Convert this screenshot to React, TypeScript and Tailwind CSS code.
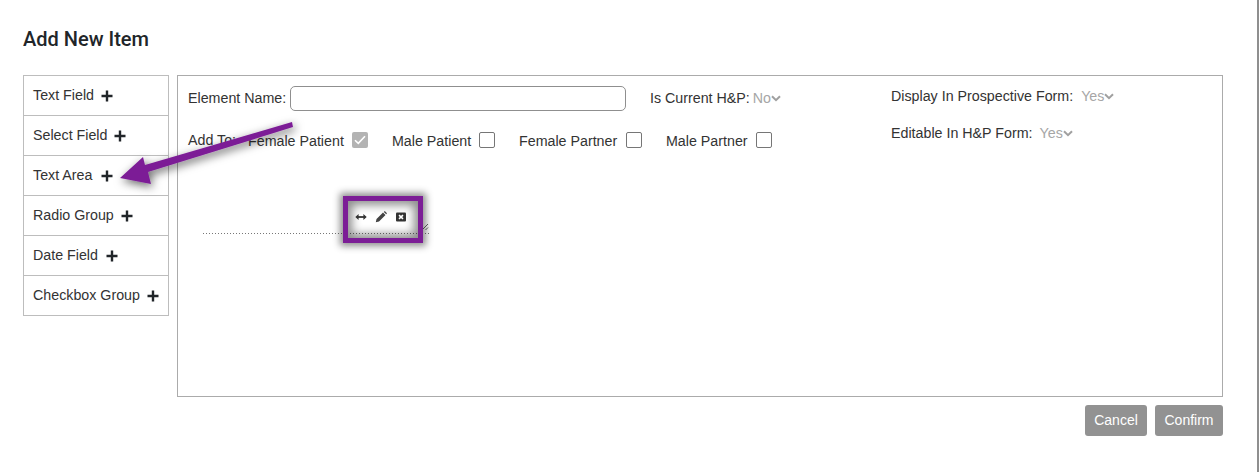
import React from "react";

const items: [string, string][] = [
  ["Text Field", "ml-[7px]"],
  ["Select Field", "ml-[7px]"],
  ["Text Area", "ml-[9px]"],
  ["Radio Group", "ml-[7px]"],
  ["Date Field", "ml-[8px]"],
  ["Checkbox Group", "ml-[7px]"],
];

function Plus({ gap }: { gap: string }) {
  return (
    <svg width="12" height="12" viewBox="0 0 12 12" className={`${gap} shrink-0`}>
      <path d="M6 0.5V11.5M0.5 6H11.5" stroke="#212529" strokeWidth="2.4" />
    </svg>
  );
}

function Chevron() {
  return (
    <svg width="10" height="7" viewBox="0 0 10 7" className="shrink-0">
      <path d="M1 1.2L5 5.2L9 1.2" fill="none" stroke="#a0a0a0" strokeWidth="2" />
    </svg>
  );
}

function Check({ label, checked, width, gap = "ml-[8px]" }: { label: string; checked?: boolean; width: string; gap?: string }) {
  return (
    <div className={`flex items-center ${width}`}>
      <span className="mt-[4px] whitespace-nowrap">{label}</span>
      {checked ? (
        <span className={`${gap} flex h-[16px] w-[16px] items-center justify-center rounded-[2px] bg-[#b3b3b3]`}>
          <svg width="12" height="10" viewBox="0 0 12 10">
            <path d="M1 5.2L4.3 8.4L11 1.2" fill="none" stroke="#fff" strokeWidth="1.6" />
          </svg>
        </span>
      ) : (
        <span className={`${gap} h-[16px] w-[16px] rounded-[2px] border-[1.5px] border-[#767676] bg-white`} />
      )}
    </div>
  );
}

export default function App() {
  return (
    <div
      className="relative h-[472px] w-[1259px] overflow-hidden border-r-2 border-[#8f8f8f] bg-white text-[14.25px] text-[#333]"
      style={{ fontFamily: '"Liberation Sans", Arial, sans-serif' }}
    >
      <div className="pl-[23px] pr-[34px] pt-[27px]">
        <h1 className="h-[48px] font-['Roboto',sans-serif] text-[20px] leading-[24px] font-medium text-[#212529]">
          Add New Item
        </h1>
        <div className="flex items-start gap-[8px]">
          <div className="w-[146px] border border-b-0 border-[#bdbdbd]">
            {items.map(([label, gap]) => (
              <div key={label} className="flex h-[40px] items-center border-b border-[#bdbdbd] pl-[9px]">
                <span className="whitespace-nowrap">{label}</span>
                <Plus gap={gap} />
              </div>
            ))}
          </div>
          <div className="h-[322px] flex-1 border border-[#ababab] pl-[10px] pt-[10px]">
            <div className="flex">
              <div className="w-[703px] shrink-0">
                <div className="flex h-[24px] items-center">
                  <span className="w-[102px] shrink-0 whitespace-nowrap pt-[1px]">Element Name:</span>
                  <span className="h-[25px] w-[336px] shrink-0 rounded-[5px] border border-[#8f8f8f]" />
                  <span className="ml-[24px] whitespace-nowrap pt-[1px]">Is Current H&amp;P:</span>
                  <span className="ml-[3px] pt-[1px] text-[#a6a6a6]">No</span>
                  <Chevron />
                </div>
                <div className="mt-[18px] flex h-[24px] items-center">
                  <span className="w-[60px] shrink-0 whitespace-nowrap pt-[2px]">Add To:</span>
                  <Check label="Female Patient" checked width="w-[144px]" />
                  <Check label="Male Patient" width="w-[127px]" />
                  <Check label="Female Partner" width="w-[147px]" gap="ml-[9px]" />
                  <Check label="Male Partner" width="w-[110px]" />
                </div>
                <div className="relative ml-[15px] mt-[61px] h-[21px] w-[226px]">
                  <div className="absolute inset-x-0 bottom-0 h-[1px] bg-[repeating-linear-gradient(90deg,#777_0_1px,transparent_1px_3px)]" />
                  <svg width="8" height="8" viewBox="0 0 8 8" className="absolute bottom-[3px] right-0">
                    <path d="M1 7L7 1M4.5 7L7 4.5" stroke="#666" strokeWidth="1" />
                  </svg>
                </div>
              </div>
              <div className="-mt-[2px]">
                <div className="flex h-[24px] items-center">
                  <span className="whitespace-nowrap pt-[1px]">Display In Prospective Form:</span>
                  <span className="ml-[8px] pt-[1px] text-[#a6a6a6]">Yes</span>
                  <Chevron />
                </div>
                <div className="mt-[13px] flex h-[24px] items-center">
                  <span className="whitespace-nowrap pt-[1px]">Editable In H&amp;P Form:</span>
                  <span className="ml-[7px] pt-[1px] text-[#a6a6a6]">Yes</span>
                  <Chevron />
                </div>
              </div>
            </div>
          </div>
        </div>
        <div className="mt-[8px] flex justify-end gap-[8px]">
          <button className="h-[31px] w-[62px] rounded-[3px] bg-[#929292] text-[14px] text-white">Cancel</button>
          <button className="h-[31px] w-[68px] rounded-[3px] bg-[#929292] text-[14px] text-white">Confirm</button>
        </div>
      </div>

      {/* annotation box with edit toolbar */}
      <div className="absolute left-[343px] top-[196px] flex h-[47px] w-[80px] items-start gap-[8px] border-[5px] border-[#7c1e96] pl-[7px] pt-[10px] shadow-[0_0_7px_3px_rgba(0,0,0,0.45),inset_0_0_10px_4px_rgba(0,0,0,0.45)]">
        <svg width="12" height="12" viewBox="0 0 12 12">
          <path d="M2 6H10" stroke="#333" strokeWidth="1.8" />
          <path d="M3.6 3L0.3 6L3.6 9ZM8.4 3L11.7 6L8.4 9Z" fill="#333" />
        </svg>
        <svg width="12" height="12" viewBox="0 0 12 12">
          <path d="M0.8 11.2L1.5 8L8 1.5L10.5 4L4 10.5Z M8.8 .9L9.8 0L12 2.2L11.2 3.2Z" fill="#444" />
        </svg>
        <svg width="12" height="12" viewBox="0 0 12 12">
          <rect x="1" y="1.5" width="10" height="9" rx="1" fill="#333" />
          <path d="M4 4.2L8 7.8M8 4.2L4 7.8" stroke="#fff" strokeWidth="1.6" />
        </svg>
      </div>

      {/* arrow annotation */}
      <svg width="1259" height="472" className="pointer-events-none absolute left-0 top-0">
        <defs>
          <filter id="s" x="-20%" y="-30%" width="140%" height="170%">
            <feDropShadow dx="2" dy="3" stdDeviation="5" floodColor="#000" floodOpacity="0.6" />
          </filter>
        </defs>
        <path d="M292 122L293 127L148 172L151 184L120 178L143 157L145 165Z" fill="#7c1e96" filter="url(#s)" />
      </svg>
    </div>
  );
}
